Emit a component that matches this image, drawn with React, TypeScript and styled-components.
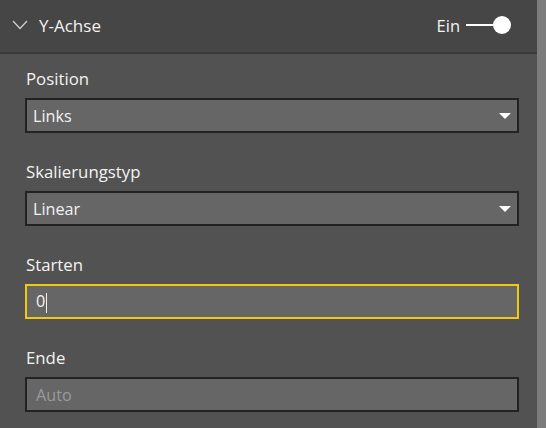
import React from "react";
import styled, { createGlobalStyle } from "styled-components";

const Global = createGlobalStyle`
  html, body { margin: 0; padding: 0; background: #525252; }
  body { font-family: "Open Sans", "Noto Sans", sans-serif; }
  * { box-sizing: border-box; }
`;

const Frame = styled.div`
  display: flex;
  width: 546px;
  height: 428px;
  overflow: hidden;
  background: #525252;
`;

const Main = styled.div`
  flex: 1;
  display: flex;
  flex-direction: column;
`;

const Scrollbar = styled.div`
  width: 9px;
  background: #7c7c7c;
`;

const Header = styled.div`
  height: 54px;
  display: flex;
  align-items: center;
  padding: 0 0 2px 12px;
  background: #464646;
  border-bottom: 2px solid #393939;
  color: #f2f2f2;
`;

const Title = styled.span`
  font-size: 17px;
  margin-left: 11px;
  flex: 1;
`;

const ToggleLabel = styled.span`
  font-size: 16.5px;
  margin-right: 6px;
`;

const Toggle = styled.div`
  display: flex;
  align-items: center;
  margin-right: 26px;
`;

const Track = styled.div`
  width: 28px;
  height: 2px;
  background: #fff;
`;

const Knob = styled.div`
  width: 18px;
  height: 18px;
  border-radius: 50%;
  background: #fff;
  margin-left: -1px;
`;

const Content = styled.div`
  display: grid;
  gap: 28px;
  padding: 14px 18px 0 25px;
`;

const Field = styled.div`
  display: grid;
  grid-template-rows: 22px 35px;
  row-gap: 8px;
`;

const Label = styled.div`
  font-size: 16.8px;
  line-height: 22px;
  color: #f2f2f2;
  padding-left: 1px;
`;

const Box = styled.div<{ $focused?: boolean }>`
  height: 35px;
  display: flex;
  align-items: center;
  background: #666666;
  border: 2px solid ${(p) => (p.$focused ? "#f2c811" : "#222222")};
  font-size: 16.2px;
  color: #f2f2f2;
`;

const SelectText = styled.span`
  flex: 1;
  padding-left: 6px;
`;

const Arrow = styled.span`
  width: 0;
  height: 0;
  border-left: 6px solid transparent;
  border-right: 6px solid transparent;
  border-top: 6px solid #ffffff;
  margin-right: 6px;
  margin-top: 1px;
`;

const InputText = styled.span<{ $placeholder?: boolean }>`
  padding-left: 9px;
  color: ${(p) => (p.$placeholder ? "#9a9a9a" : "#f2f2f2")};
`;

const Caret = styled.span`
  display: inline-block;
  width: 1px;
  height: 20px;
  background: #f2f2f2;
  margin-left: 1px;
  vertical-align: middle;
`;

const Chevron = () => (
  <svg width="16" height="10" viewBox="0 0 16 10">
    <polyline points="1,1 8,8.5 15,1" fill="none" stroke="#cfcfcf" strokeWidth="1.3" />
  </svg>
);

function Select({ value }: { value: string }) {
  return (
    <Box>
      <SelectText>{value}</SelectText>
      <Arrow />
    </Box>
  );
}

export default function App() {
  return (
    <>
      <Global />
      <Frame>
        <Main>
          <Header>
            <Chevron />
            <Title>Y-Achse</Title>
            <ToggleLabel>Ein</ToggleLabel>
            <Toggle>
              <Track />
              <Knob />
            </Toggle>
          </Header>
          <Content>
            <Field>
              <Label>Position</Label>
              <Select value="Links" />
            </Field>
            <Field>
              <Label>Skalierungstyp</Label>
              <Select value="Linear" />
            </Field>
            <Field>
              <Label>Starten</Label>
              <Box $focused>
                <InputText>
                  0<Caret />
                </InputText>
              </Box>
            </Field>
            <Field>
              <Label>Ende</Label>
              <Box>
                <InputText $placeholder>Auto</InputText>
              </Box>
            </Field>
          </Content>
        </Main>
        <Scrollbar />
      </Frame>
    </>
  );
}
